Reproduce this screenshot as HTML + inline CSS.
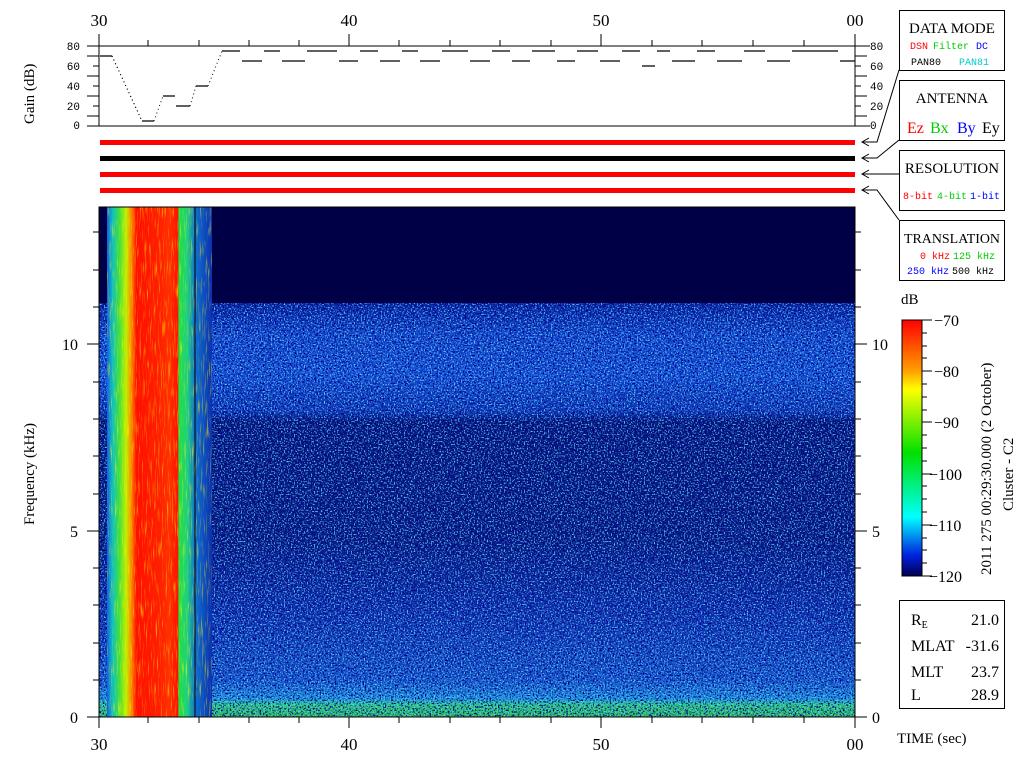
<!DOCTYPE html>
<html><head><meta charset="utf-8"><style>
html,body{margin:0;padding:0;background:#fff;width:1024px;height:768px;overflow:hidden}
svg{display:block}
text{font-family:"Liberation Serif",serif}
.m text{font-family:"Liberation Mono",monospace}
</style></head><body>
<svg width="1024" height="768" viewBox="0 0 1024 768" xmlns="http://www.w3.org/2000/svg">
<defs>
<linearGradient id="bg" x1="0" y1="207" x2="0" y2="717" gradientUnits="userSpaceOnUse">
<stop offset="0" stop-color="#000046"/>
<stop offset="0.17" stop-color="#000046"/>
<stop offset="0.19" stop-color="#0820a0"/>
<stop offset="0.25" stop-color="#1548d0"/>
<stop offset="0.33" stop-color="#1650d8"/>
<stop offset="0.40" stop-color="#1038b8"/>
<stop offset="0.42" stop-color="#061478"/>
<stop offset="0.65" stop-color="#081880"/>
<stop offset="0.80" stop-color="#1030b0"/>
<stop offset="0.93" stop-color="#1858d0"/>
<stop offset="0.965" stop-color="#2098e0"/>
<stop offset="0.975" stop-color="#30d080"/>
<stop offset="1" stop-color="#30c050"/>
</linearGradient>
<linearGradient id="strip" x1="99" y1="0" x2="212" y2="0" gradientUnits="userSpaceOnUse">
<stop offset="0" stop-color="#0a2aa8"/>
<stop offset="0.07" stop-color="#1060e0"/>
<stop offset="0.12" stop-color="#10c0c0"/>
<stop offset="0.18" stop-color="#40e040"/>
<stop offset="0.24" stop-color="#c0f000"/>
<stop offset="0.29" stop-color="#ff8000"/>
<stop offset="0.33" stop-color="#ff1000"/>
<stop offset="0.55" stop-color="#ff2000"/>
<stop offset="0.62" stop-color="#ff3000"/>
<stop offset="0.70" stop-color="#ff1000"/>
<stop offset="0.705" stop-color="#20e040"/>
<stop offset="0.78" stop-color="#20d080"/>
<stop offset="0.85" stop-color="#1070d0"/>
<stop offset="1" stop-color="#0a30b0"/>
</linearGradient>
<linearGradient id="cb" x1="0" y1="320" x2="0" y2="576" gradientUnits="userSpaceOnUse">
<stop offset="0" stop-color="#ff0000"/>
<stop offset="0.2" stop-color="#ffa000"/>
<stop offset="0.27" stop-color="#ffff00"/>
<stop offset="0.52" stop-color="#00e000"/>
<stop offset="0.77" stop-color="#00ffff"/>
<stop offset="0.92" stop-color="#0020e0"/>
<stop offset="1" stop-color="#000050"/>
</linearGradient>
<filter id="noise" x="0" y="0" width="100%" height="100%">
<feTurbulence type="fractalNoise" baseFrequency="0.7" numOctaves="1" seed="3"/>
<feColorMatrix type="matrix" values="0 0 0 0 0.1  0 0 0 0 0.75  0 0 0 0 1  5 0 0 0 -2.6"/>
</filter>
<filter id="noiseD" x="0" y="0" width="100%" height="100%">
<feTurbulence type="fractalNoise" baseFrequency="0.6" numOctaves="1" seed="11"/>
<feColorMatrix type="matrix" values="0 0 0 0 0  0 0 0 0 0  0 0 0 0 0.25  5 0 0 0 -2.4"/>
</filter>
<filter id="noise2" x="0" y="0" width="100%" height="100%">
<feTurbulence type="fractalNoise" baseFrequency="0.8 0.05" numOctaves="2" seed="7"/>
<feColorMatrix type="matrix" values="0 0 0 0 1  0 0 0 0 0.9  0 0 0 0 0  4 0 0 0 -2.2"/>
</filter>
</defs>

<g font-size="17" text-anchor="middle">
<text x="99" y="26">30</text><text x="349" y="26">40</text><text x="601" y="26">50</text><text x="855" y="26">00</text>
</g>

<g stroke="#000" stroke-width="1" fill="none">
<line x1="87" y1="46" x2="870" y2="46"/>
<line x1="87" y1="126" x2="870" y2="126"/>
<line x1="99" y1="34" x2="99" y2="126"/>
<line x1="855" y1="34" x2="855" y2="126"/>
<line x1="349" y1="34" x2="349" y2="46"/>
<line x1="601" y1="34" x2="601" y2="46"/>
<path d="M148 40v6M199 40v6M249 40v6M299 40v6M399 40v6M450 40v6M500 40v6M551 40v6M652 40v6M702 40v6M753 40v6M804 40v6"/>
<path d="M87 56h12M93 66h6M87 76h12M93 86h6M87 96h12M93 106h6M87 116h12M855 56h12M855 66h6M855 76h12M855 86h6M855 96h12M855 106h6M855 116h12"/>
<path stroke-width="1.2" d="M100 56h12M142 121h12M163 96h12M176 106h14M196 86h12M222 51h18M242 61h20M264 51h16M282 61h23M307 51h30M339 61h19M360 51h18M380 61h20M402 51h16M420 61h20M442 51h26M470 61h20M492 51h18M512 61h18M532 51h23M557 61h18M577 51h21M600 61h20M622 51h18M642 66h13M657 51h13M672 61h23M697 51h18M717 61h25M744 51h21M767 61h23M792 51h46M840 61h15"/>
<polyline stroke-dasharray="1,3" points="112,56 142,121 M154,121"/>
<path stroke-dasharray="1,3" d="M112 56L142 121M154 121L163 96M190 106L196 86M208 86L222 51"/>
</g>
<g class="m" font-size="11" text-anchor="end">
<text x="80" y="50">80</text><text x="80" y="70">60</text><text x="80" y="90">40</text><text x="80" y="110">20</text><text x="80" y="129">0</text>
</g>
<g class="m" font-size="11">
<text x="870" y="50">80</text><text x="870" y="70">60</text><text x="870" y="90">40</text><text x="870" y="110">20</text><text x="870" y="129">0</text>
</g>
<text x="0" y="0" font-size="15" transform="translate(34,124) rotate(-90)">Gain (dB)</text>

<rect x="100" y="140" width="755" height="5" fill="#f00"/>
<rect x="100" y="156" width="755" height="5" fill="#000"/>
<rect x="100" y="172" width="755" height="5" fill="#f00"/>
<rect x="100" y="188" width="755" height="5" fill="#f00"/>

<g stroke="#000" fill="none">
<path d="M899 70 L877 142 H862 M869 138 L862 142 L869 146"/>
<path d="M899 140 L877 158 H862 M869 154 L862 158 L869 162"/>
<path d="M899 174 H862 M869 170 L862 174 L869 178"/>
<path d="M899 220 L877 190 H862 M869 186 L862 190 L869 194"/>
</g>

<g fill="#fff" stroke="#000">
<rect x="899.5" y="10.5" width="105" height="60"/>
<rect x="899.5" y="80.5" width="105" height="60"/>
<rect x="899.5" y="150.5" width="105" height="60"/>
<rect x="899.5" y="220.5" width="105" height="60"/>
<rect x="899.5" y="600.5" width="105" height="108"/>
</g>
<g font-size="15" text-anchor="middle">
<text x="952" y="33">DATA MODE</text>
<text x="952" y="103">ANTENNA</text>
<text x="952" y="173">RESOLUTION</text>
<text x="952" y="243" font-size="14" textLength="96" lengthAdjust="spacingAndGlyphs">TRANSLATION</text>
</g>
<g class="m" font-size="10">
<text x="910" y="49" fill="#f00">DSN</text><text x="933" y="49" fill="#0c0">Filter</text><text x="976" y="49" fill="#00f">DC</text>
<text x="911" y="65" fill="#000">PAN80</text><text x="959" y="65" fill="#0cc">PAN81</text>
<text x="903" y="199" fill="#f00">8-bit</text><text x="937" y="199" fill="#0c0">4-bit</text><text x="970" y="199" fill="#00f">1-bit</text>
<text x="920" y="259" fill="#f00">0 kHz</text><text x="953" y="259" fill="#0c0">125 kHz</text>
<text x="907" y="274" fill="#00f">250 kHz</text><text x="952" y="274" fill="#000">500 kHz</text>
</g>
<g font-size="16">
<text x="907" y="133" fill="#f00">Ez</text><text x="930" y="133" fill="#0c0">Bx</text><text x="957" y="133" fill="#00f">By</text><text x="982" y="133" fill="#000">Ey</text>
</g>

<rect x="99" y="207" width="756" height="510" fill="url(#bg)"/>
<rect x="99" y="207" width="756" height="510" filter="url(#noiseD)"/>
<rect x="99" y="207" width="756" height="510" filter="url(#noise)" opacity="0.9"/>
<rect x="99" y="207" width="756" height="96" fill="#000046"/>
<rect x="107" y="207" width="105" height="510" fill="url(#strip)"/>
<rect x="107" y="207" width="105" height="510" filter="url(#noise2)" opacity="0.6"/>
<rect x="99" y="207" width="756" height="510" fill="none" stroke="#000"/>
<line x1="195" y1="207" x2="195" y2="717" stroke="#000"/>

<g stroke="#000">
<line x1="99" y1="717" x2="99" y2="728"/><line x1="349" y1="717" x2="349" y2="728"/><line x1="601" y1="717" x2="601" y2="728"/><line x1="855" y1="717" x2="855" y2="728"/>
<path d="M148 717v6M199 717v6M249 717v6M299 717v6M399 717v6M450 717v6M500 717v6M551 717v6M652 717v6M702 717v6M753 717v6M804 717v6"/>
<path d="M87 717h12M87 531h12M87 344h12M93 680h6M93 643h6M93 605h6M93 568h6M93 494h6M93 456h6M93 419h6M93 382h6M93 307h6M93 270h6M93 232h6"/>
<path d="M855 717h12M855 531h12M855 344h12M855 680h6M855 643h6M855 605h6M855 568h6M855 494h6M855 456h6M855 419h6M855 382h6M855 307h6M855 270h6M855 232h6"/>
</g>
<g font-size="16" text-anchor="end">
<text x="78" y="723">0</text><text x="78" y="537">5</text><text x="78" y="350">10</text>
</g>
<g font-size="16">
<text x="872" y="723">0</text><text x="872" y="537">5</text><text x="872" y="350">10</text>
</g>
<text font-size="15" transform="translate(34,525) rotate(-90)">Frequency (kHz)</text>
<g font-size="17" text-anchor="middle">
<text x="99" y="750">30</text><text x="349" y="750">40</text><text x="601" y="750">50</text><text x="855" y="750">00</text>
</g>
<text x="897" y="743" font-size="15">TIME (sec)</text>

<text x="901" y="304" font-size="15">dB</text>
<rect x="902" y="320" width="20" height="256" fill="url(#cb)" stroke="#000"/>
<g stroke="#000">
<path d="M922 320h10M922 371h10M922 422h10M922 474h10M922 525h10M922 576h10"/>
<path d="M922 333h5M922 346h5M922 358h5M922 384h5M922 397h5M922 410h5M922 435h5M922 448h5M922 461h5M922 486h5M922 499h5M922 512h5M922 538h5M922 550h5M922 563h5"/>
</g>
<g font-size="16">
<text x="934" y="326">−70</text><text x="934" y="377">−80</text><text x="934" y="428">−90</text>
<text x="929" y="480">−100</text><text x="929" y="531">−110</text><text x="929" y="582">−120</text>
</g>
<text font-size="15" transform="translate(991,575) rotate(-90)">2011 275 00:29:30.000 (2 October)</text>
<text font-size="15" transform="translate(1013,511) rotate(-90)">Cluster - C2</text>

<g font-size="16">
<text x="911" y="625">R<tspan font-size="10" dy="3">E</tspan></text>
<text x="911" y="651">MLAT</text><text x="911" y="677">MLT</text><text x="911" y="700">L</text>
</g>
<g font-size="16" text-anchor="end">
<text x="999" y="625">21.0</text><text x="999" y="651">-31.6</text><text x="999" y="677">23.7</text><text x="999" y="700">28.9</text>
</g>
</svg>
</body></html>
